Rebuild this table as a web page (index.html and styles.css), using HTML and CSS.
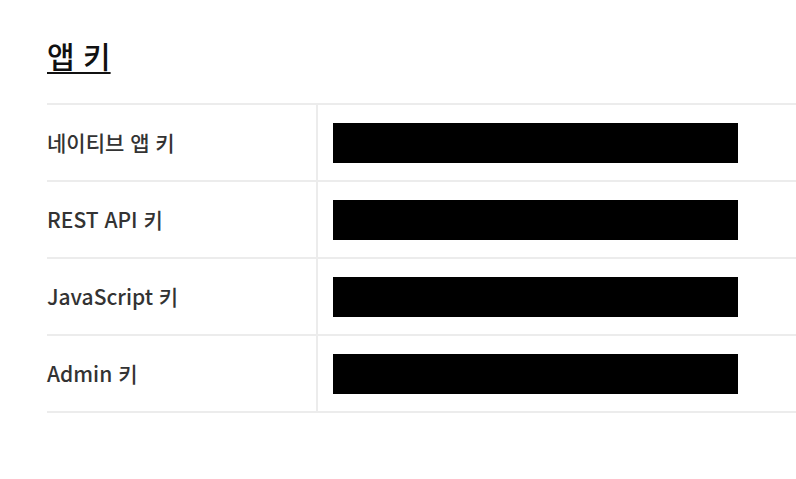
FILE: index.html
```html
<!DOCTYPE html>
<html lang="ko">
<head>
<meta charset="utf-8">
<link rel="stylesheet" href="styles.css">
</head>
<body>
<main class="page">
  <h2 class="title">앱 키</h2>
  <div class="keys">
    <div class="row">
      <div class="label">네이티브 앱 키</div>
      <div class="value"><span class="mask"></span></div>
    </div>
    <div class="row">
      <div class="label">REST API 키</div>
      <div class="value"><span class="mask"></span></div>
    </div>
    <div class="row">
      <div class="label">JavaScript 키</div>
      <div class="value"><span class="mask"></span></div>
    </div>
    <div class="row">
      <div class="label">Admin 키</div>
      <div class="value"><span class="mask"></span></div>
    </div>
  </div>
</main>
</body>
</html>
```

FILE: styles.css
```css
* { box-sizing: border-box; }
html, body { margin: 0; padding: 0; background: #fff; }
body {
  font-family: "Noto Sans CJK KR", "Noto Sans", sans-serif;
  color: #333;
}
.page {
  padding: 35px 0 0 47px;
}
.title {
  margin: 0 0 28px 0;
  font-size: 30px;
  font-weight: 500;
  line-height: 40px;
  color: #111;
  text-decoration: underline;
  text-decoration-thickness: 2px;
  text-underline-offset: 4px;
}
.keys {
  border-top: 2px solid #ececec;
}
.row {
  display: grid;
  grid-template-columns: 269px 1fr;
  border-bottom: 2px solid #ececec;
  height: 77px;
}
.label {
  display: flex;
  align-items: center;
  font-size: 21px;
  font-weight: 500;
  color: #333;
  padding-bottom: 2px;
}
.value {
  border-left: 2px solid #ececec;
  padding: 18px 0 0 15px;
}
.mask {
  display: block;
  width: 405px;
  height: 40px;
  background: #000;
}
```
